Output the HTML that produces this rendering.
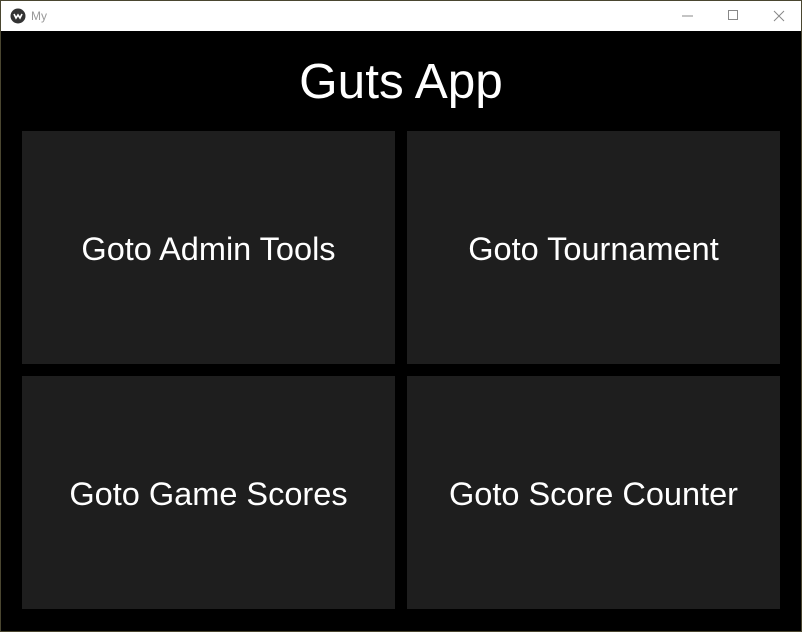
<!DOCTYPE html>
<html><head><meta charset="utf-8"><style>
html,body{margin:0;padding:0;width:802px;height:632px;overflow:hidden;background:#4a4630;font-family:"Liberation Sans",sans-serif}
#tb{position:absolute;left:1px;top:1px;width:800px;height:30px;background:#fff}
#c{position:absolute;left:1px;top:31px;width:800px;height:600px;background:#000}
.b{position:absolute;background:#1e1e1e;color:#fff;font-size:32.5px;display:flex;align-items:center;justify-content:center;width:373px;height:233px}
.b span{position:relative;top:2px}
</style></head><body>
<div id="tb">
<svg style="position:absolute;left:9px;top:7px" width="16" height="16"><circle cx="8" cy="8" r="7.5" fill="#333"/><path d="M4 6 L6 10 L8 7 L10 10 L12 6" stroke="#fff" stroke-width="1.6" fill="none"/></svg>
<span style="position:absolute;left:30px;top:8px;font-size:12px;color:#999">My</span>
<svg style="position:absolute;left:676px;top:8px" width="115" height="14"><path d="M5 7h11" stroke="#888"/><rect x="51.5" y="1.5" width="9" height="9" fill="none" stroke="#888"/><path d="M97 2l10 10M107 2l-10 10" stroke="#888"/></svg>
</div>
<div id="c">
<div style="position:absolute;left:0;width:800px;top:22px;text-align:center;color:#fff;font-size:49.5px">Guts App</div>
<div class="b" style="left:21px;top:100px"><span>Goto Admin Tools</span></div>
<div class="b" style="left:406px;top:100px"><span>Goto Tournament</span></div>
<div class="b" style="left:21px;top:345px"><span>Goto Game Scores</span></div>
<div class="b" style="left:406px;top:345px"><span>Goto Score Counter</span></div>
</div>
</body></html>
